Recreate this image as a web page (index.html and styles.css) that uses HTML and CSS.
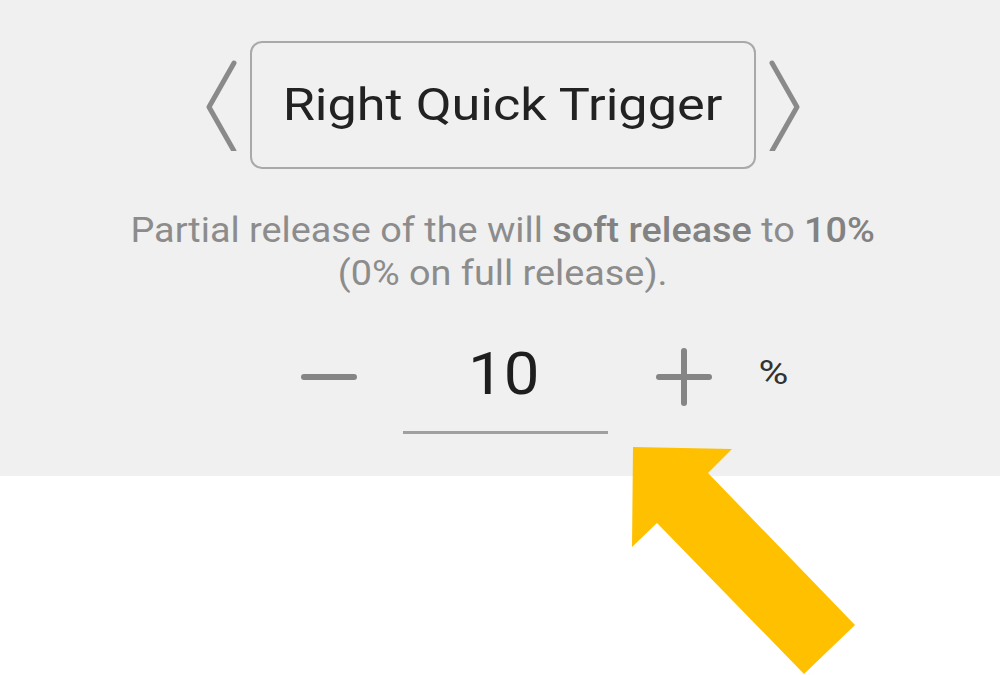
FILE: index.html
```html
<!DOCTYPE html>
<html>
<head>
<meta charset="utf-8">
<link rel="stylesheet" href="styles.css">
</head>
<body>
<div class="page">
  <section class="panel">
    <div class="selector">
      <svg class="chev" width="32" height="92" viewBox="0 0 32 92">
        <polyline points="28,4 3,48 28,92" />
      </svg>
      <div class="selector-box"><span class="title">Right Quick Trigger</span></div>
      <svg class="chev" width="32" height="92" viewBox="0 0 32 92">
        <polyline points="4,4 29,48 4,92" />
      </svg>
    </div>
    <p class="desc"><span class="desc-text">Partial release of the will <b>soft release</b> to <b>10%</b><br>(0% on full release).</span></p>
    <div class="stepper">
      <svg class="step-btn" width="56" height="80" viewBox="0 0 56 80">
        <line x1="3" y1="40" x2="53" y2="40" />
      </svg>
      <div class="field"><span class="value">10</span></div>
      <svg class="step-btn" width="56" height="80" viewBox="0 0 56 80">
        <line x1="3" y1="40" x2="53" y2="40" />
        <line x1="28" y1="14" x2="28" y2="66" />
      </svg>
      <span class="unit">%</span>
    </div>
  </section>
  <svg class="arrow" width="1000" height="675" viewBox="0 0 1000 675">
    <polygon points="633,447 732,449 708,473 855,625 804,674 657,523 632,547" />
  </svg>
</div>
</body>
</html>
```

FILE: styles.css
```css
html, body {
  margin: 0;
  padding: 0;
  background: #ffffff;
}

.page {
  position: relative;
  width: 1000px;
  height: 675px;
  overflow: hidden;
  font-family: Roboto, "Liberation Sans", sans-serif;
}

.panel {
  height: 476px;
  box-sizing: border-box;
  background: #f0f0f0;
  padding-top: 41px;
  display: flex;
  flex-direction: column;
  align-items: center;
}

.selector {
  display: flex;
  align-items: center;
  gap: 12px;
  margin-left: 6px;
}

.chev polyline {
  fill: none;
  stroke: #8a8a8a;
  stroke-width: 5;
  stroke-linecap: round;
  stroke-linejoin: round;
}

.selector-box {
  width: 506px;
  height: 128px;
  box-sizing: border-box;
  border: 2px solid #a9a9a9;
  border-radius: 12px;
  display: flex;
  align-items: center;
  justify-content: center;
  font-size: 45px;
  color: #222222;
}

.title {
  display: inline-block;
  transform: scaleX(1.16);
  margin-top: -2px;
}

.desc {
  margin: 40px 0 0 6px;
  font-size: 35px;
  line-height: 43px;
  color: #8c8c8c;
  text-align: center;
}

.desc-text {
  display: inline-block;
  transform: scaleX(1.08);
}

.desc b {
  font-weight: 500;
  color: #828282;
}

.stepper {
  margin-top: 42px;
  margin-left: 83px;
  display: flex;
  align-items: flex-start;
}

.step-btn line {
  stroke: #858585;
  stroke-width: 6;
  stroke-linecap: round;
}

.field {
  width: 205px;
  margin: 0 48px 0 46px;
  line-height: 80px;
  padding-bottom: 14px;
  border-bottom: 3px solid #a0a0a0;
  text-align: center;
  font-size: 60px;
  color: #1e1e1e;
}

.value {
  display: inline-block;
  transform: translate(-1px, -3px) scaleX(1.06);
}

.unit {
  display: inline-block;
  margin-left: 46px;
  line-height: 80px;
  font-size: 34px;
  color: #333333;
  transform: translate(3px, -5px) scaleX(1.2);
}

.arrow {
  position: absolute;
  left: 0;
  top: 0;
}

.arrow polygon {
  fill: #ffc000;
}
```
